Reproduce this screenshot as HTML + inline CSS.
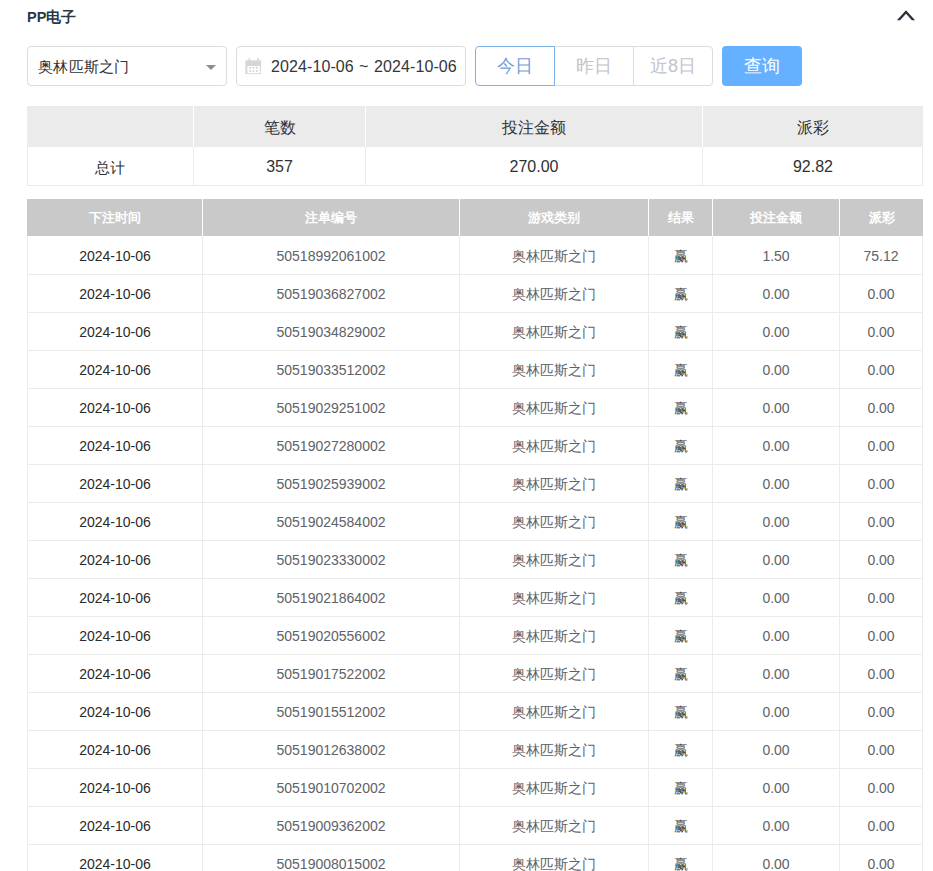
<!DOCTYPE html><html><head><meta charset="utf-8"><style>
*{box-sizing:border-box;margin:0;padding:0}
html,body{width:933px;height:871px;overflow:hidden;background:#fff;font-family:"Liberation Sans",sans-serif;}
.a{position:absolute}
.title{left:27px;top:9px;font-size:14.5px;line-height:17px;font-weight:bold;color:#2b3847}
.chev{left:896px;top:8px;width:20px;height:14px}
.box{border:1px solid #dcdcdc;border-radius:4px;background:#fff}
.sel{left:27px;top:46px;width:200px;height:40px}
.seltxt{left:38px;top:58px;font-size:15px;letter-spacing:0.3px;line-height:18px;color:#303133}
.caret{left:206px;top:65px;width:0;height:0;border-left:5px solid transparent;border-right:5px solid transparent;border-top:5px solid #8c8c8c}
.date{left:236px;top:46px;width:230px;height:40px}
.dtxt{top:58px;font-size:16px;line-height:18px;color:#34363a;letter-spacing:0.1px}
.rg{top:46px;height:40px;border:1px solid #dcdcdc;font-size:18px;line-height:39px;text-align:center;color:#c0c4cc;background:#fff}
.q{left:722px;top:46px;width:80px;height:40px;border-radius:4px;background:#66b1ff;color:#fff;font-size:18px;line-height:41px;text-align:center}
.cell{position:absolute;text-align:center;white-space:nowrap}
.sh{background:#ebebeb;color:#303133;font-size:16px;line-height:43px}
.sb{color:#303133;font-size:16px;line-height:39px}
.mh{background:#c9c9c9;color:#fff;font-size:13px;font-weight:bold;line-height:38px}
.mb{color:#606266;font-size:14px;line-height:39px}
.mb.c0{color:#2a2a2a}.mb.c3{color:#3a3a3a}
.hl{position:absolute;height:1px;background:#ebebeb}
.vl{position:absolute;width:1px;background:#ebebeb}
</style></head><body>
<div class="a title">PP电子</div>
<svg class="a" style="left:890px;top:0px" width="30" height="30" viewBox="0 0 30 30"><polygon points="6.9,20.2 16,10.2 25.1,20.2 21.9,20.2 16,13.7 10.1,20.2" fill="#2b303b"/></svg>
<div class="a box sel"></div><div class="a seltxt">奥林匹斯之门</div><div class="a caret"></div>
<div class="a box date"></div>
<svg class="a" style="left:244px;top:57px" width="20" height="20" viewBox="0 0 20 20"><rect x="1.4" y="3.3" width="15.6" height="13.8" fill="#d6d6d6"/><rect x="3.3" y="9" width="12.6" height="7.2" fill="#fff"/><rect x="4.6" y="1.2" width="1.6" height="3.5" fill="#d6d6d6"/><rect x="13.3" y="1.2" width="1.6" height="3.5" fill="#d6d6d6"/><g fill="#d0d0d0"><rect x="5.4" y="10" width="1.6" height="1.6"/><rect x="8.5" y="10" width="1.6" height="1.6"/><rect x="12" y="10" width="1.6" height="1.6"/><rect x="5.4" y="13.2" width="1.6" height="1.6"/><rect x="8.5" y="13.2" width="1.6" height="1.6"/><rect x="12" y="13.2" width="1.6" height="1.6"/></g></svg>
<div class="a dtxt" style="left:271px">2024-10-06</div><div class="a dtxt" style="left:359px">~</div><div class="a dtxt" style="left:374px">2024-10-06</div>
<div class="a rg" style="left:554px;width:80px;border-left:none">昨日</div>
<div class="a rg" style="left:633px;width:80px;border-radius:0 4px 4px 0">近8日</div>
<div class="a rg" style="left:475px;width:80px;border-color:#7db3e8;color:#749fdc;border-radius:4px 0 0 4px">今日</div>
<div class="a q">查询</div>
<div class="cell sh" style="left:27px;top:106px;width:166px;height:41px"></div>
<div class="cell sb" style="left:27px;top:147px;width:166px;height:38px"><span style="font-size:15px;position:relative;top:1px">总计</span></div>
<div class="cell sh" style="left:194px;top:106px;width:171px;height:41px">笔数</div>
<div class="cell sb" style="left:194px;top:147px;width:171px;height:38px">357</div>
<div class="cell sh" style="left:366px;top:106px;width:336px;height:41px">投注金额</div>
<div class="cell sb" style="left:366px;top:147px;width:336px;height:38px">270.00</div>
<div class="cell sh" style="left:703px;top:106px;width:220px;height:41px">派彩</div>
<div class="cell sb" style="left:703px;top:147px;width:220px;height:38px">92.82</div>
<div class="hl" style="left:27px;top:185px;width:896px"></div>
<div class="vl" style="left:27px;top:147px;height:38px"></div>
<div class="vl" style="left:193px;top:147px;height:38px"></div>
<div class="vl" style="left:193px;top:106px;height:41px;background:#fff"></div>
<div class="vl" style="left:365px;top:147px;height:38px"></div>
<div class="vl" style="left:365px;top:106px;height:41px;background:#fff"></div>
<div class="vl" style="left:702px;top:147px;height:38px"></div>
<div class="vl" style="left:702px;top:106px;height:41px;background:#fff"></div>
<div class="vl" style="left:922px;top:147px;height:38px"></div>
<div class="cell mh" style="left:27px;top:199px;width:175px;height:37px">下注时间</div>
<div class="cell mh" style="left:203px;top:199px;width:256px;height:37px">注单编号</div>
<div class="cell mh" style="left:460px;top:199px;width:188px;height:37px">游戏类别</div>
<div class="cell mh" style="left:649px;top:199px;width:63px;height:37px">结果</div>
<div class="cell mh" style="left:713px;top:199px;width:126px;height:37px">投注金额</div>
<div class="cell mh" style="left:840px;top:199px;width:83px;height:37px">派彩</div>
<div class="vl" style="left:202px;top:199px;height:37px;background:#fff"></div>
<div class="vl" style="left:459px;top:199px;height:37px;background:#fff"></div>
<div class="vl" style="left:648px;top:199px;height:37px;background:#fff"></div>
<div class="vl" style="left:712px;top:199px;height:37px;background:#fff"></div>
<div class="vl" style="left:839px;top:199px;height:37px;background:#fff"></div>
<div class="cell mb c0" style="left:28px;top:237px;width:174px;height:37px">2024-10-06</div>
<div class="cell mb c1" style="left:203px;top:237px;width:256px;height:37px">50518992061002</div>
<div class="cell mb c2" style="left:460px;top:237px;width:188px;height:37px">奥林匹斯之门</div>
<div class="cell mb c3" style="left:649px;top:237px;width:63px;height:37px">赢</div>
<div class="cell mb c4" style="left:713px;top:237px;width:126px;height:37px">1.50</div>
<div class="cell mb c5" style="left:840px;top:237px;width:82px;height:37px">75.12</div>
<div class="hl" style="left:27px;top:274px;width:896px"></div>
<div class="cell mb c0" style="left:28px;top:275px;width:174px;height:37px">2024-10-06</div>
<div class="cell mb c1" style="left:203px;top:275px;width:256px;height:37px">50519036827002</div>
<div class="cell mb c2" style="left:460px;top:275px;width:188px;height:37px">奥林匹斯之门</div>
<div class="cell mb c3" style="left:649px;top:275px;width:63px;height:37px">赢</div>
<div class="cell mb c4" style="left:713px;top:275px;width:126px;height:37px">0.00</div>
<div class="cell mb c5" style="left:840px;top:275px;width:82px;height:37px">0.00</div>
<div class="hl" style="left:27px;top:312px;width:896px"></div>
<div class="cell mb c0" style="left:28px;top:313px;width:174px;height:37px">2024-10-06</div>
<div class="cell mb c1" style="left:203px;top:313px;width:256px;height:37px">50519034829002</div>
<div class="cell mb c2" style="left:460px;top:313px;width:188px;height:37px">奥林匹斯之门</div>
<div class="cell mb c3" style="left:649px;top:313px;width:63px;height:37px">赢</div>
<div class="cell mb c4" style="left:713px;top:313px;width:126px;height:37px">0.00</div>
<div class="cell mb c5" style="left:840px;top:313px;width:82px;height:37px">0.00</div>
<div class="hl" style="left:27px;top:350px;width:896px"></div>
<div class="cell mb c0" style="left:28px;top:351px;width:174px;height:37px">2024-10-06</div>
<div class="cell mb c1" style="left:203px;top:351px;width:256px;height:37px">50519033512002</div>
<div class="cell mb c2" style="left:460px;top:351px;width:188px;height:37px">奥林匹斯之门</div>
<div class="cell mb c3" style="left:649px;top:351px;width:63px;height:37px">赢</div>
<div class="cell mb c4" style="left:713px;top:351px;width:126px;height:37px">0.00</div>
<div class="cell mb c5" style="left:840px;top:351px;width:82px;height:37px">0.00</div>
<div class="hl" style="left:27px;top:388px;width:896px"></div>
<div class="cell mb c0" style="left:28px;top:389px;width:174px;height:37px">2024-10-06</div>
<div class="cell mb c1" style="left:203px;top:389px;width:256px;height:37px">50519029251002</div>
<div class="cell mb c2" style="left:460px;top:389px;width:188px;height:37px">奥林匹斯之门</div>
<div class="cell mb c3" style="left:649px;top:389px;width:63px;height:37px">赢</div>
<div class="cell mb c4" style="left:713px;top:389px;width:126px;height:37px">0.00</div>
<div class="cell mb c5" style="left:840px;top:389px;width:82px;height:37px">0.00</div>
<div class="hl" style="left:27px;top:426px;width:896px"></div>
<div class="cell mb c0" style="left:28px;top:427px;width:174px;height:37px">2024-10-06</div>
<div class="cell mb c1" style="left:203px;top:427px;width:256px;height:37px">50519027280002</div>
<div class="cell mb c2" style="left:460px;top:427px;width:188px;height:37px">奥林匹斯之门</div>
<div class="cell mb c3" style="left:649px;top:427px;width:63px;height:37px">赢</div>
<div class="cell mb c4" style="left:713px;top:427px;width:126px;height:37px">0.00</div>
<div class="cell mb c5" style="left:840px;top:427px;width:82px;height:37px">0.00</div>
<div class="hl" style="left:27px;top:464px;width:896px"></div>
<div class="cell mb c0" style="left:28px;top:465px;width:174px;height:37px">2024-10-06</div>
<div class="cell mb c1" style="left:203px;top:465px;width:256px;height:37px">50519025939002</div>
<div class="cell mb c2" style="left:460px;top:465px;width:188px;height:37px">奥林匹斯之门</div>
<div class="cell mb c3" style="left:649px;top:465px;width:63px;height:37px">赢</div>
<div class="cell mb c4" style="left:713px;top:465px;width:126px;height:37px">0.00</div>
<div class="cell mb c5" style="left:840px;top:465px;width:82px;height:37px">0.00</div>
<div class="hl" style="left:27px;top:502px;width:896px"></div>
<div class="cell mb c0" style="left:28px;top:503px;width:174px;height:37px">2024-10-06</div>
<div class="cell mb c1" style="left:203px;top:503px;width:256px;height:37px">50519024584002</div>
<div class="cell mb c2" style="left:460px;top:503px;width:188px;height:37px">奥林匹斯之门</div>
<div class="cell mb c3" style="left:649px;top:503px;width:63px;height:37px">赢</div>
<div class="cell mb c4" style="left:713px;top:503px;width:126px;height:37px">0.00</div>
<div class="cell mb c5" style="left:840px;top:503px;width:82px;height:37px">0.00</div>
<div class="hl" style="left:27px;top:540px;width:896px"></div>
<div class="cell mb c0" style="left:28px;top:541px;width:174px;height:37px">2024-10-06</div>
<div class="cell mb c1" style="left:203px;top:541px;width:256px;height:37px">50519023330002</div>
<div class="cell mb c2" style="left:460px;top:541px;width:188px;height:37px">奥林匹斯之门</div>
<div class="cell mb c3" style="left:649px;top:541px;width:63px;height:37px">赢</div>
<div class="cell mb c4" style="left:713px;top:541px;width:126px;height:37px">0.00</div>
<div class="cell mb c5" style="left:840px;top:541px;width:82px;height:37px">0.00</div>
<div class="hl" style="left:27px;top:578px;width:896px"></div>
<div class="cell mb c0" style="left:28px;top:579px;width:174px;height:37px">2024-10-06</div>
<div class="cell mb c1" style="left:203px;top:579px;width:256px;height:37px">50519021864002</div>
<div class="cell mb c2" style="left:460px;top:579px;width:188px;height:37px">奥林匹斯之门</div>
<div class="cell mb c3" style="left:649px;top:579px;width:63px;height:37px">赢</div>
<div class="cell mb c4" style="left:713px;top:579px;width:126px;height:37px">0.00</div>
<div class="cell mb c5" style="left:840px;top:579px;width:82px;height:37px">0.00</div>
<div class="hl" style="left:27px;top:616px;width:896px"></div>
<div class="cell mb c0" style="left:28px;top:617px;width:174px;height:37px">2024-10-06</div>
<div class="cell mb c1" style="left:203px;top:617px;width:256px;height:37px">50519020556002</div>
<div class="cell mb c2" style="left:460px;top:617px;width:188px;height:37px">奥林匹斯之门</div>
<div class="cell mb c3" style="left:649px;top:617px;width:63px;height:37px">赢</div>
<div class="cell mb c4" style="left:713px;top:617px;width:126px;height:37px">0.00</div>
<div class="cell mb c5" style="left:840px;top:617px;width:82px;height:37px">0.00</div>
<div class="hl" style="left:27px;top:654px;width:896px"></div>
<div class="cell mb c0" style="left:28px;top:655px;width:174px;height:37px">2024-10-06</div>
<div class="cell mb c1" style="left:203px;top:655px;width:256px;height:37px">50519017522002</div>
<div class="cell mb c2" style="left:460px;top:655px;width:188px;height:37px">奥林匹斯之门</div>
<div class="cell mb c3" style="left:649px;top:655px;width:63px;height:37px">赢</div>
<div class="cell mb c4" style="left:713px;top:655px;width:126px;height:37px">0.00</div>
<div class="cell mb c5" style="left:840px;top:655px;width:82px;height:37px">0.00</div>
<div class="hl" style="left:27px;top:692px;width:896px"></div>
<div class="cell mb c0" style="left:28px;top:693px;width:174px;height:37px">2024-10-06</div>
<div class="cell mb c1" style="left:203px;top:693px;width:256px;height:37px">50519015512002</div>
<div class="cell mb c2" style="left:460px;top:693px;width:188px;height:37px">奥林匹斯之门</div>
<div class="cell mb c3" style="left:649px;top:693px;width:63px;height:37px">赢</div>
<div class="cell mb c4" style="left:713px;top:693px;width:126px;height:37px">0.00</div>
<div class="cell mb c5" style="left:840px;top:693px;width:82px;height:37px">0.00</div>
<div class="hl" style="left:27px;top:730px;width:896px"></div>
<div class="cell mb c0" style="left:28px;top:731px;width:174px;height:37px">2024-10-06</div>
<div class="cell mb c1" style="left:203px;top:731px;width:256px;height:37px">50519012638002</div>
<div class="cell mb c2" style="left:460px;top:731px;width:188px;height:37px">奥林匹斯之门</div>
<div class="cell mb c3" style="left:649px;top:731px;width:63px;height:37px">赢</div>
<div class="cell mb c4" style="left:713px;top:731px;width:126px;height:37px">0.00</div>
<div class="cell mb c5" style="left:840px;top:731px;width:82px;height:37px">0.00</div>
<div class="hl" style="left:27px;top:768px;width:896px"></div>
<div class="cell mb c0" style="left:28px;top:769px;width:174px;height:37px">2024-10-06</div>
<div class="cell mb c1" style="left:203px;top:769px;width:256px;height:37px">50519010702002</div>
<div class="cell mb c2" style="left:460px;top:769px;width:188px;height:37px">奥林匹斯之门</div>
<div class="cell mb c3" style="left:649px;top:769px;width:63px;height:37px">赢</div>
<div class="cell mb c4" style="left:713px;top:769px;width:126px;height:37px">0.00</div>
<div class="cell mb c5" style="left:840px;top:769px;width:82px;height:37px">0.00</div>
<div class="hl" style="left:27px;top:806px;width:896px"></div>
<div class="cell mb c0" style="left:28px;top:807px;width:174px;height:37px">2024-10-06</div>
<div class="cell mb c1" style="left:203px;top:807px;width:256px;height:37px">50519009362002</div>
<div class="cell mb c2" style="left:460px;top:807px;width:188px;height:37px">奥林匹斯之门</div>
<div class="cell mb c3" style="left:649px;top:807px;width:63px;height:37px">赢</div>
<div class="cell mb c4" style="left:713px;top:807px;width:126px;height:37px">0.00</div>
<div class="cell mb c5" style="left:840px;top:807px;width:82px;height:37px">0.00</div>
<div class="hl" style="left:27px;top:844px;width:896px"></div>
<div class="cell mb c0" style="left:28px;top:845px;width:174px;height:37px">2024-10-06</div>
<div class="cell mb c1" style="left:203px;top:845px;width:256px;height:37px">50519008015002</div>
<div class="cell mb c2" style="left:460px;top:845px;width:188px;height:37px">奥林匹斯之门</div>
<div class="cell mb c3" style="left:649px;top:845px;width:63px;height:37px">赢</div>
<div class="cell mb c4" style="left:713px;top:845px;width:126px;height:37px">0.00</div>
<div class="cell mb c5" style="left:840px;top:845px;width:82px;height:37px">0.00</div>
<div class="hl" style="left:27px;top:882px;width:896px"></div>
<div class="vl" style="left:27px;top:236px;height:647px"></div>
<div class="vl" style="left:202px;top:236px;height:647px"></div>
<div class="vl" style="left:459px;top:236px;height:647px"></div>
<div class="vl" style="left:648px;top:236px;height:647px"></div>
<div class="vl" style="left:712px;top:236px;height:647px"></div>
<div class="vl" style="left:839px;top:236px;height:647px"></div>
<div class="vl" style="left:922px;top:236px;height:647px"></div>
</body></html>
